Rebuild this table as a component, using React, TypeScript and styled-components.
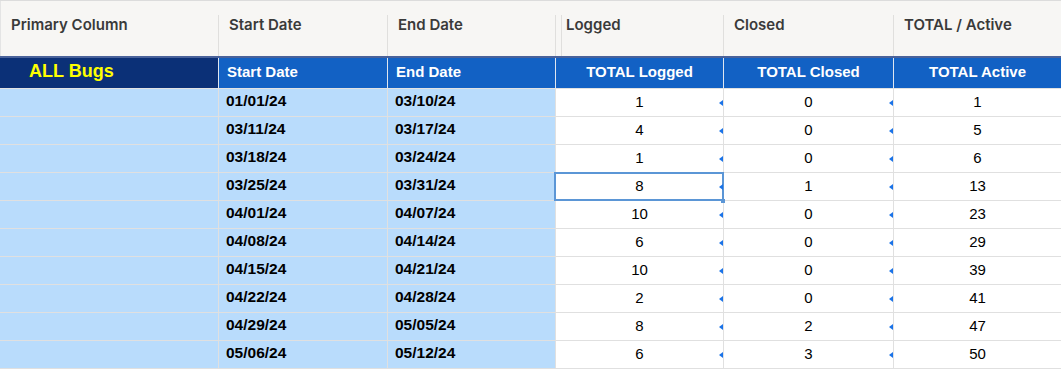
import React from "react";
import styled, { createGlobalStyle, css } from "styled-components";

const GlobalStyle = createGlobalStyle`
  html, body {
    margin: 0;
    padding: 0;
    background: #ffffff;
  }
  * {
    box-sizing: border-box;
  }
`;

interface Row {
  start: string;
  end: string;
  logged: number;
  closed: number;
  active: number;
}

const rows: Row[] = [
  { start: "01/01/24", end: "03/10/24", logged: 1, closed: 0, active: 1 },
  { start: "03/11/24", end: "03/17/24", logged: 4, closed: 0, active: 5 },
  { start: "03/18/24", end: "03/24/24", logged: 1, closed: 0, active: 6 },
  { start: "03/25/24", end: "03/31/24", logged: 8, closed: 1, active: 13 },
  { start: "04/01/24", end: "04/07/24", logged: 10, closed: 0, active: 23 },
  { start: "04/08/24", end: "04/14/24", logged: 6, closed: 0, active: 29 },
  { start: "04/15/24", end: "04/21/24", logged: 10, closed: 0, active: 39 },
  { start: "04/22/24", end: "04/28/24", logged: 2, closed: 0, active: 41 },
  { start: "04/29/24", end: "05/05/24", logged: 8, closed: 2, active: 47 },
  { start: "05/06/24", end: "05/12/24", logged: 6, closed: 3, active: 50 },
];

const columns = ["Primary Column", "Start Date", "End Date", "Logged", "Closed", "TOTAL / Active"];

const App: React.FC = () => {
  return (
    <>
      <GlobalStyle />
      <Sheet>
        <HeaderRow>
          {columns.map((c, i) => (
            <HeaderCell key={c} $first={i === 0} $double={i === 3}>
              {c}
            </HeaderCell>
          ))}
        </HeaderRow>
        <Divider />
        <TitleRow>
          <TitleCell $navy>
            <BugsLabel>ALL Bugs</BugsLabel>
          </TitleCell>
          <TitleCell>Start Date</TitleCell>
          <TitleCell>End Date</TitleCell>
          <TitleCell $center>TOTAL Logged</TitleCell>
          <TitleCell $center>TOTAL Closed</TitleCell>
          <TitleCell $center>TOTAL Active</TitleCell>
        </TitleRow>
        {rows.map((r, i) => (
          <DataRow key={r.start}>
            <Cell $tinted />
            <Cell $tinted $date>
              {r.start}
            </Cell>
            <Cell $tinted $date>
              {r.end}
            </Cell>
            <Cell $marker $selected={i === 3}>
              {r.logged}
              {i === 3 && <FillHandle />}
            </Cell>
            <Cell $marker>{r.closed}</Cell>
            <Cell>{r.active}</Cell>
          </DataRow>
        ))}
      </Sheet>
    </>
  );
};

const grid = css`
  display: grid;
  grid-template-columns: 219px 169px 168px 168px 170px 1fr;
`;

const Sheet = styled.div`
  width: 1061px;
  border-top: 1px solid #dcdcdc;
  font-family: "Liberation Sans", Arial, sans-serif;
`;

const HeaderRow = styled.div`
  ${grid};
  height: 55px;
  background: #f7f6f4;
`;

const HeaderCell = styled.div<{ $first?: boolean; $double?: boolean }>`
  position: relative;
  padding: 14px 10px 0;
  font-family: Inter, "Noto Sans", sans-serif;
  font-weight: 600;
  font-size: 15px;
  color: #3a3a3a;
  border-left: ${(p) => (p.$first ? "1px solid #e4e4e4" : "none")};

  &::before {
    content: ${(p) => (p.$first ? "none" : '""')};
    position: absolute;
    left: -1px;
    top: 14px;
    bottom: 0;
    width: ${(p) => (p.$double ? "5px" : "1px")};
    border-left: 1px solid #e0dfdd;
    border-right: ${(p) => (p.$double ? "1px solid #e0dfdd" : "none")};
  }
`;

const Divider = styled.div`
  height: 2px;
  background: #4a629a;
`;

const TitleRow = styled.div`
  ${grid};
  height: 31px;
  border-bottom: 1px solid #e2e2e2;
`;

const TitleCell = styled.div<{ $navy?: boolean; $center?: boolean }>`
  display: flex;
  align-items: center;
  justify-content: ${(p) => (p.$center ? "center" : "flex-start")};
  padding: 0 8px 4px;
  background: ${(p) => (p.$navy ? "#0b3077" : "#1261c4")};
  color: #ffffff;
  font-weight: 700;
  font-size: 15px;
  border-right: 1px solid #dfe6f0;

  &:last-child {
    border-right: none;
  }
`;

const BugsLabel = styled.span`
  padding-left: 21px;
  color: #ffff00;
  font-size: 18px;
  font-weight: 700;
`;

const DataRow = styled.div`
  ${grid};
  height: 28px;
`;

const Cell = styled.div<{
  $tinted?: boolean;
  $date?: boolean;
  $marker?: boolean;
  $selected?: boolean;
}>`
  position: relative;
  z-index: ${(p) => (p.$selected ? 2 : "auto")};
  display: flex;
  align-items: center;
  justify-content: ${(p) => (p.$date ? "flex-start" : "center")};
  padding: 0 7px 3px;
  background: ${(p) => (p.$tinted ? "#b9dcfc" : "#ffffff")};
  border-right: 1px solid #e0e0e0;
  border-bottom: 1px solid #e0e0e0;
  color: #000000;
  font-size: ${(p) => (p.$date ? "15.5px" : "15px")};
  font-weight: ${(p) => (p.$date ? 700 : 400)};

  &:last-child {
    border-right: none;
  }

  ${(p) =>
    p.$marker &&
    css`
      &::after {
        content: "";
        position: absolute;
        right: 0;
        top: 50%;
        margin-top: -3px;
        border-top: 3px solid transparent;
        border-bottom: 3px solid transparent;
        border-right: 4px solid #1a73e8;
      }
    `}

  ${(p) =>
    p.$selected &&
    css`
      &::before {
        content: "";
        position: absolute;
        left: -2px;
        top: -1px;
        right: -1px;
        bottom: -1px;
        border: 2px solid #5b96d6;
        pointer-events: none;
      }
    `}
`;

const FillHandle = styled.span`
  position: absolute;
  right: -2px;
  bottom: -3px;
  width: 4px;
  height: 4px;
  background: #5b96d6;
`;

export default App;
